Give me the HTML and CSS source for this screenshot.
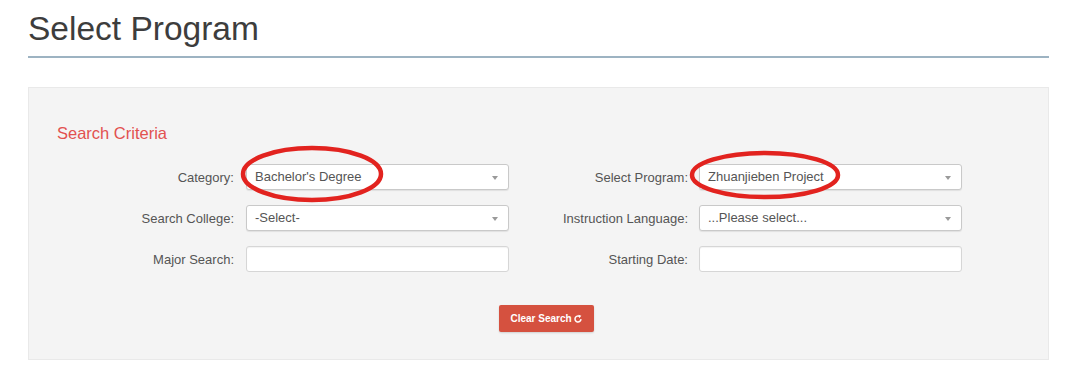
FILE: index.html
```html
<!DOCTYPE html>
<html>
<head>
<meta charset="utf-8">
<link rel="stylesheet" href="styles.css">
</head>
<body>
<div class="page">
  <h1 class="title">Select Program</h1>
  <div class="panel">
    <div class="legend">Search Criteria</div>
    <div class="cols">
      <div class="col">
        <div class="row"><label class="lbl">Category:</label><div class="field select">Bachelor's Degree<span class="caret"></span></div></div>
        <div class="row"><label class="lbl">Search College:</label><div class="field select">-Select-<span class="caret"></span></div></div>
        <div class="row"><label class="lbl">Major Search:</label><div class="field"></div></div>
      </div>
      <div class="col">
        <div class="row"><label class="lbl">Select Program:</label><div class="field select">Zhuanjieben Project<span class="caret"></span></div></div>
        <div class="row"><label class="lbl">Instruction Language:</label><div class="field select">...Please select...<span class="caret"></span></div></div>
        <div class="row"><label class="lbl">Starting Date:</label><div class="field"></div></div>
      </div>
    </div>
    <div class="actions">
      <button class="btn">Clear Search<svg class="ico" viewBox="0 0 12 12" width="10" height="10"><path d="M9.6 6.2A3.6 3.6 0 1 1 8 3" fill="none" stroke="#fff" stroke-width="1.8"/><path d="M6.6 0.8L10 2.2 7.6 5z" fill="#fff"/></svg></button>
    </div>
  </div>
  <svg class="mark mark1" viewBox="0 0 146 60" width="146" height="60"><ellipse cx="73" cy="30" rx="69" ry="26" fill="none" stroke="#e2231f" stroke-width="4.5"/></svg>
  <svg class="mark mark2" viewBox="0 0 154 52" width="154" height="52"><ellipse cx="77" cy="26" rx="73" ry="22" fill="none" stroke="#e2231f" stroke-width="4.5"/></svg>
</div>
</body>
</html>
```

FILE: styles.css
```css
* { box-sizing: border-box; }
html, body { margin: 0; padding: 0; background: #fff; }
body { font-family: "Liberation Sans", Arial, sans-serif; }
.page { position: relative; padding: 0 31px 0 28px; }
.title {
  margin: 0;
  padding-top: 9px;
  font-size: 33.5px;
  font-weight: normal;
  color: #3d3d3d;
  line-height: 40px;
  height: 58px;
  border-bottom: 2px solid #9db3c2;
}
.panel {
  margin-top: 29px;
  height: 273px;
  background: #f4f4f4;
  border: 1px solid #e9e9e9;
  padding: 36px 0 0 28px;
}
.legend {
  font-size: 16.5px;
  color: #e2514f;
  line-height: 18px;
}
.cols { display: flex; gap: 29px; margin-top: 22px; padding-left: 27px; }
.col { display: flex; flex-direction: column; gap: 15px; }
.row { display: flex; align-items: center; height: 26px; }
.lbl {
  width: 150px;
  text-align: right;
  font-size: 13px;
  color: #555;
  margin-right: 12px;
}
.col + .col .lbl { margin-right: 11px; }
.field {
  position: relative;
  width: 263px;
  height: 26px;
  background: #fff;
  border: 1px solid #d6d6d6;
  border-radius: 3px;
  box-shadow: inset 0 1px 1px rgba(0,0,0,0.05);
  font-size: 13px;
  color: #555;
  line-height: 24px;
  padding-left: 8px;
}
.select { border-color: #c9c9c9; box-shadow: 0 1px 1px rgba(0,0,0,0.08); }
.caret {
  position: absolute;
  right: 10px;
  top: 11px;
  border-left: 3px solid transparent;
  border-right: 3px solid transparent;
  border-top: 4px solid #9a9a9a;
}
.actions { display: flex; justify-content: center; padding-right: 12px; margin-top: 33px; }
.btn {
  width: 95px;
  height: 27px;
  border: none;
  border-radius: 2px;
  background: #d5513f;
  color: #fff;
  font-family: "Liberation Sans", Arial, sans-serif;
  font-size: 10px;
  font-weight: bold;
  display: flex;
  align-items: center;
  justify-content: center;
  gap: 1px;
  padding: 0;
  box-shadow: 0 1px 2px rgba(0,0,0,0.15);
}
.ico { display: block; }
.mark { position: absolute; }
.mark1 { left: 239px; top: 144px; }
.mark2 { left: 688px; top: 149px; }
```
